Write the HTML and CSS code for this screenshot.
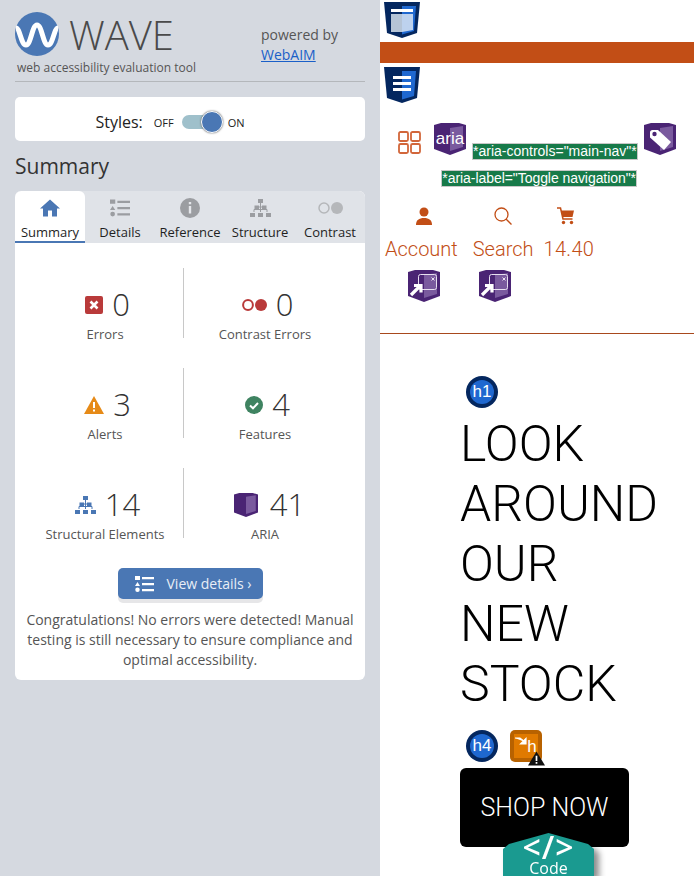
FILE: index.html
```html
<!DOCTYPE html>
<html lang="en">
<head>
<meta charset="utf-8">
<title>WAVE</title>
<link rel="stylesheet" href="styles.css">
</head>
<body>
<svg class="defs" width="0" height="0" aria-hidden="true">
  <symbol id="shield" viewBox="0 0 36 36">
    <path d="M0 0H36L33 31L18 36L3 31Z" fill="#04275f"/>
    <path d="M18 4H32L30 29L18 32.500Z" fill="#1f68d0"/>
  </symbol>
  <symbol id="aria" viewBox="0 0 32 32">
    <path d="M0 2L7 0H25L32 2V26L16 32L0 26Z" fill="#4a2474"/>
    <path d="M16 5L29 3V24L16 28Z" fill="#7a5a9e"/>
  </symbol>
  <symbol id="popup" viewBox="0 0 32 32">
    <use href="#aria" width="32" height="32"/>
    <rect x="10.500" y="4.500" width="18" height="15" rx="2" fill="none" stroke="#e8e0f0" stroke-width="1"/>
    <path d="M23.500 7.500l3 3m0-3l-3 3" stroke="#e8e0f0" stroke-width="1"/>
    <path d="M3 25L12 16M6 15.500H13V22.500" fill="none" stroke="#fff" stroke-width="3.200"/>
  </symbol>
  <symbol id="heading" viewBox="0 0 32 32">
    <circle cx="16" cy="16" r="16" fill="#04275f"/>
    <circle cx="16" cy="16" r="12" fill="#1f68d0"/>
  </symbol>
  <symbol id="tree" viewBox="0 0 21 18">
    <path d="M10.500 4V8M4 13V10.500H17V13M10.500 8V13M7 8H14" fill="none" stroke="currentColor" stroke-width="1"/>
    <path d="M8 0H13V4H8ZM4.500 6.500H9V10H4.500ZM12 6.500H16.500V10H12ZM0 14H5V18H0ZM8 14H13V18H8ZM16 14H21V18H16Z" fill="currentColor"/>
  </symbol>
  <symbol id="list" viewBox="0 0 19 16">
    <path d="M0 0H5V4H0ZM2.500 6L5 10H0ZM2.500 11.500A2.250 2.250 0 1 1 2.490 16Z M2.500 11.500A2.250 2.250 0 1 0 2.510 16Z" fill="currentColor"/>
    <path d="M7 1H19V3.200H7ZM7 7H19V9.200H7ZM7 13H19V15.200H7Z" fill="currentColor"/>
  </symbol>
</svg>

<main class="page">
  <aside class="side">
    <header class="brand">
      <div class="brand-main">
        <div class="logo-row">
          <svg class="logo" viewBox="0 0 44 44" aria-hidden="true">
            <circle cx="22" cy="22" r="22" fill="#4a77b4"/>
            <path d="M1 16C5 16 6 33 11 33C16 33 17 13 22 13C27 13 28 33 33 33C38 33 39 16 43 16" fill="none" stroke="#fff" stroke-width="5"/>
          </svg>
          <span class="wave">WAVE</span>
        </div>
        <p class="tagline">web accessibility evaluation tool</p>
      </div>
      <div class="powered">powered by<br><a href="#">WebAIM</a></div>
    </header>

    <section class="styles-card">
      <span class="styles-label">Styles:</span>
      <span class="switch-text off">OFF</span>
      <span class="switch"><span class="knob"></span></span>
      <span class="switch-text">ON</span>
    </section>

    <h2 class="summary-title">Summary</h2>

    <section class="panel">
      <nav class="tabs">
        <div class="tab active">
          <svg class="tab-icon" viewBox="0 0 20 17"><path d="M10 0L20 9H17V17H12V11H8V17H3V9H0Z" fill="#4a77b4"/></svg>
          <span>Summary</span>
        </div>
        <div class="tab">
          <svg class="tab-icon list-icon"><use href="#list"/></svg>
          <span>Details</span>
        </div>
        <div class="tab">
          <svg class="tab-icon" viewBox="0 0 20 20"><circle cx="10" cy="10" r="10" fill="#9b9da1"/><path d="M8.800 4H11.200V6.300H8.800ZM8.800 8H11.200V15.500H8.800Z" fill="#e4e6ea"/></svg>
          <span>Reference</span>
        </div>
        <div class="tab">
          <svg class="tab-icon tree-grey"><use href="#tree"/></svg>
          <span>Structure</span>
        </div>
        <div class="tab">
          <svg class="tab-icon contrast-icon" viewBox="0 0 25 12"><circle cx="6" cy="6" r="5" fill="none" stroke="#b5b7ba" stroke-width="1.500"/><circle cx="19" cy="6" r="6" fill="#b5b7ba"/></svg>
          <span>Contrast</span>
        </div>
      </nav>

      <div class="stats">
        <div class="stat">
          <div class="stat-top">
            <svg class="ic" width="18" height="18" viewBox="0 0 18 18"><rect width="18" height="18" rx="2" fill="#b93a3a"/><path d="M5.500 5.500l7 7m0-7l-7 7" stroke="#fff" stroke-width="2.600"/></svg>
            <span class="num">0</span>
          </div>
          <div class="stat-label">Errors</div>
        </div>
        <div class="stat">
          <div class="stat-top">
            <svg class="ic" width="25" height="12" viewBox="0 0 25 12"><circle cx="6" cy="6" r="4.900" fill="none" stroke="#b93a3a" stroke-width="2"/><circle cx="19" cy="6" r="6" fill="#b93a3a"/></svg>
            <span class="num">0</span>
          </div>
          <div class="stat-label">Contrast Errors</div>
        </div>
        <div class="stat">
          <div class="stat-top">
            <svg class="ic" width="20" height="18" viewBox="0 0 20 18"><path d="M10 0L20 18H0Z" fill="#e68a17"/><path d="M9 6H11V12H9ZM9 13.500H11V15.500H9Z" fill="#fff"/></svg>
            <span class="num">3</span>
          </div>
          <div class="stat-label">Alerts</div>
        </div>
        <div class="stat">
          <div class="stat-top">
            <svg class="ic" width="18" height="18" viewBox="0 0 18 18"><circle cx="9" cy="9" r="9" fill="#3f8361"/><path d="M5 9.500l3 2.800 5-5.300" fill="none" stroke="#fff" stroke-width="2"/></svg>
            <span class="num">4</span>
          </div>
          <div class="stat-label">Features</div>
        </div>
        <div class="stat">
          <div class="stat-top">
            <svg class="ic tree-blue" width="21" height="18"><use href="#tree"/></svg>
            <span class="num">14</span>
          </div>
          <div class="stat-label">Structural Elements</div>
        </div>
        <div class="stat">
          <div class="stat-top wide">
            <svg class="ic" width="24" height="24"><use href="#aria" width="24" height="24"/></svg>
            <span class="num">41</span>
          </div>
          <div class="stat-label">ARIA</div>
        </div>
      </div>

      <div class="details-wrap">
        <a class="details-btn" href="#">
          <svg class="btn-icon"><use href="#list"/></svg>
          <span>View details ›</span>
        </a>
      </div>

      <p class="congrats">Congratulations! No errors were detected! Manual testing is still necessary to ensure compliance and optimal accessibility.</p>
    </section>
  </aside>

  <section class="site">
    <svg class="wave-icon first"><use href="#shield"/><path d="M7 7H29V10H7Z" fill="#fff"/><path d="M7 12H18V30H7Z" fill="#b5c4d6"/><path d="M18 12H29V28L18 30Z" fill="#bdd2ee"/></svg>
    <div class="orange-bar"></div>
    <svg class="wave-icon"><use href="#shield"/><path d="M9 9H27V12H9ZM9 15H27V18H9ZM9 21H27V24H9Z" fill="#fff"/></svg>

    <div class="aria-row">
      <svg class="grid-icon" viewBox="0 0 23 23"><g fill="none" stroke="#d2663a" stroke-width="1.800" stroke-linejoin="round"><rect x="1" y="1" width="9" height="9" rx="1.500"/><rect x="13" y="1" width="9" height="9" rx="1.500"/><rect x="1" y="13" width="9" height="9" rx="1.500"/><rect x="13" y="13" width="9" height="9" rx="1.500"/></g></svg>
      <span class="badge">
        <svg width="32" height="32"><use href="#aria" width="32" height="32"/></svg>
        <span class="badge-text">aria</span>
      </span>
      <span class="attr first-attr">*aria-controls="main-nav"*</span>
      <svg class="tag-icon" width="32" height="32"><use href="#aria" width="32" height="32"/><path d="M6 9.500A2.500 2.500 0 0 1 8.500 7H14L27 19L20 27L6 14.500Z" fill="#fff"/><circle cx="10.500" cy="11" r="2.200" fill="#4a2474"/></svg>
    </div>
    <div class="attr-row"><span class="attr">*aria-label="Toggle navigation"*</span></div>

    <div class="nav-row">
      <div class="nav-item account">
        <svg class="nav-icon" viewBox="0 0 18 18"><circle cx="9" cy="5" r="4.500" fill="#c24e16"/><path d="M1 18C1 13 4 11 9 11S17 13 17 18Z" fill="#c24e16"/></svg>
        <span>Account</span>
      </div>
      <div class="nav-item search">
        <svg class="nav-icon" viewBox="0 0 18 18"><circle cx="7.500" cy="7.500" r="6.500" fill="none" stroke="#c24e16" stroke-width="1.300"/><path d="M12 12L17.500 17.500" stroke="#c24e16" stroke-width="1.300"/></svg>
        <span>Search</span>
      </div>
      <div class="nav-item cart">
        <svg class="nav-icon" viewBox="0 0 18 18"><path d="M0 1H3.500L6 12H15.500" fill="none" stroke="#c24e16" stroke-width="1.500"/><path d="M4 3.500H17L15.500 10H5.500Z" fill="#c24e16"/><circle cx="6.500" cy="15.500" r="1.700" fill="#c24e16"/><circle cx="14.500" cy="15.500" r="1.700" fill="#c24e16"/></svg>
        <span>14.40</span>
      </div>
    </div>

    <div class="popup-row">
      <svg width="32" height="32"><use href="#popup" width="32" height="32"/></svg>
      <svg width="32" height="32"><use href="#popup" width="32" height="32"/></svg>
    </div>

    <hr class="rule">

    <span class="badge h-first">
      <svg width="32" height="32"><use href="#heading" width="32" height="32"/></svg>
      <span class="badge-text">h1</span>
    </span>
    <h1 class="hero">LOOK AROUND OUR NEW STOCK</h1>

    <div class="h4-row">
      <span class="badge">
        <svg width="32" height="32"><use href="#heading" width="32" height="32"/></svg>
        <span class="badge-text">h4</span>
      </span>
      <span class="badge skipped">
        <svg width="32" height="32" viewBox="0 0 32 32"><rect width="32" height="32" rx="5" fill="#b86200"/><rect x="4" y="4" width="24" height="24" fill="#e07a00"/><path d="M5 8H10L15 12M16 8.500V14H10.500Z" fill="#fff" stroke="#fff" stroke-width="1.200"/></svg>
        <span class="badge-text">h</span>
        <svg class="warn" width="17" height="15" viewBox="0 0 16 13"><path d="M8 0L16 13H0Z" fill="#111"/><path d="M7.200 4H8.800V8.800H7.200ZM7.200 9.800H8.800V11.400H7.200Z" fill="#fff"/></svg>
      </span>
    </div>

    <a class="shop" href="#">SHOP NOW</a>
    <div class="code-tab">
      <span class="code-mark">&lt;/&gt;</span>
      <span class="code-label">Code</span>
    </div>
  </section>
</main>
</body>
</html>
```

FILE: styles.css
```css
html, body {
  margin: 0;
  padding: 0;
  height: 876px;
  overflow: hidden;
  background: #fff;
}

.defs {
  position: absolute;
}

.page {
  display: flex;
  width: 694px;
  height: 876px;
}

/* Sidebar */
.side {
  box-sizing: border-box;
  flex: 0 0 380px;
  padding: 0 15px;
  background: #d5d9e0;
  font-family: "Open Sans", sans-serif;
  color: #444;
}

.brand {
  display: flex;
  height: 81px;
  box-sizing: content-box;
  border-bottom: 1px solid #b4b7bb;
}

.brand-main {
  flex: 0 0 246px;
}

.logo-row {
  display: flex;
  align-items: center;
  gap: 10px;
  padding-top: 12px;
  height: 44px;
}

.logo {
  width: 44px;
  height: 44px;
  flex: none;
}

.wave {
  padding-top: 2px;
  font-weight: 300;
  font-size: 40px;
  line-height: 40px;
  color: #4a4a4a;
}

.tagline {
  margin: 3px 0 0 2px;
  font-size: 12px;
  line-height: 18px;
  color: #555;
}

.powered {
  padding-top: 25px;
  font-size: 14px;
  line-height: 20px;
  color: #555;
}

.powered a {
  color: #1a5fc8;
}

.styles-card {
  display: flex;
  align-items: center;
  justify-content: center;
  box-sizing: border-box;
  height: 44px;
  margin-top: 15px;
  padding: 6px 40px 0 0;
  border-radius: 5px;
  background: #fff;
  color: #222;
}

.styles-label {
  font-size: 16px;
  margin-right: 11px;
}

.switch-text {
  font-size: 11px;
}

.switch {
  position: relative;
  width: 36px;
  height: 14px;
  margin: 0 10px 0 8px;
  border-radius: 7px;
  background: #9fc0cb;
}

.knob {
  position: absolute;
  top: -4px;
  right: -5px;
  box-sizing: border-box;
  width: 22px;
  height: 22px;
  border: 1px solid #fff;
  border-radius: 50%;
  background: #4a77b4;
  box-shadow: 0 0 2px #555;
}

.summary-title {
  margin: 12px 0 12px;
  font-size: 21px;
  line-height: 26px;
  font-weight: 400;
  color: #333;
}

.panel {
  border-radius: 6px;
  overflow: hidden;
  background: #fff;
}

.tabs {
  display: grid;
  grid-template-columns: repeat(5, 70px);
  height: 52px;
  background: #e0e3e8;
}

.tab {
  display: flex;
  flex-direction: column;
  align-items: center;
  box-sizing: border-box;
  height: 52px;
  padding-top: 7px;
  font-size: 13px;
  line-height: 18px;
  color: #1f1f1f;
}

.tab span {
  margin-top: auto;
  padding-bottom: 2px;
  white-space: nowrap;
}

.tab.active {
  background: #fff;
  border-radius: 6px 6px 0 0;
  border-bottom: 2px solid #4a77b4;
}

.tab.active span {
  padding-bottom: 0;
}

.tab-icon {
  width: 20px;
  height: 20px;
  flex: none;
}

.contrast-icon {
  width: 25px;
}

.list-icon {
  color: #9b9da1;
}

.tree-grey {
  width: 21px;
  height: 18px;
  margin-top: 1px;
  color: #9b9da1;
}

.tree-blue {
  color: #4a77b4;
}

.stats {
  display: grid;
  grid-template-columns: 169px 181px;
  grid-auto-rows: 70px;
  row-gap: 30px;
  padding-top: 25px;
}

.stat {
  display: flex;
  flex-direction: column;
  align-items: center;
}

.stat:nth-child(odd) {
  box-sizing: border-box;
  border-right: 1px solid #c8c8c8;
  padding-left: 12px;
}

.stat:nth-child(even) {
  padding-right: 19px;
}

.stat-top {
  display: flex;
  align-items: center;
  gap: 9px;
  height: 34px;
  margin: 20px 0 0 5px;
}

.stat-top.wide {
  gap: 12px;
  margin-left: 9px;
}

.num {
  padding-bottom: 2px;
  font-size: 31px;
  font-weight: 300;
  line-height: 32px;
  color: #333;
}

.stat-label {
  margin-top: 3px;
  font-size: 13px;
  line-height: 18px;
  color: #555;
  white-space: nowrap;
}

.details-wrap {
  display: flex;
  justify-content: center;
  margin-top: 30px;
}

.details-btn {
  display: flex;
  align-items: center;
  gap: 13px;
  box-sizing: border-box;
  width: 145px;
  height: 31px;
  padding-left: 17px;
  border-radius: 5px;
  background: #4a77b4;
  color: #e8eef6;
  font-size: 14px;
  text-decoration: none;
  box-shadow: 0 4px 0 #e6e6e8;
}

.btn-icon {
  width: 19px;
  height: 16px;
  color: #fff;
}

.congrats {
  margin: 11px 0 0;
  padding: 0 10px 10px;
  font-size: 14px;
  line-height: 20px;
  text-align: center;
  color: #555;
}

/* Evaluated page */
.site {
  flex: 1;
  min-width: 0;
  font-family: Roboto, sans-serif;
  font-weight: 300;
  color: #000;
}

.wave-icon {
  display: block;
  width: 36px;
  height: 36px;
  margin: 4px 0 0 4px;
}

.wave-icon.first {
  margin-top: 2px;
}

.orange-bar {
  height: 21px;
  margin-top: 4px;
  background: #c24e16;
}

.aria-row {
  display: flex;
  align-items: flex-start;
  height: 32px;
  margin-top: 20px;
  padding-left: 18px;
}

.grid-icon {
  width: 23px;
  height: 23px;
  margin-top: 8px;
  margin-right: 13px;
}

.badge {
  position: relative;
  display: inline-block;
  width: 32px;
  height: 32px;
  flex: none;
  line-height: 0;
}

.badge-text {
  position: absolute;
  top: 0;
  left: 0;
  width: 100%;
  font-family: "Liberation Sans", sans-serif;
  font-weight: 400;
  font-size: 17px;
  line-height: 32px;
  text-align: center;
  color: #fff;
}

.skipped .badge-text {
  left: 6px;
  top: 1px;
}

.attr {
  display: inline-block;
  box-sizing: border-box;
  height: 17px;
  border: 1px solid #c8c8c8;
  background: #177a49;
  color: #fff;
  font-family: "Liberation Sans", sans-serif;
  font-weight: 400;
  font-size: 14px;
  line-height: 15px;
  white-space: nowrap;
}

.first-attr {
  margin: 20px 6px 0 6px;
}

.attr-row {
  display: flex;
  justify-content: flex-end;
  margin-top: 15px;
  padding-right: 57px;
}

.attr-row .attr {
  letter-spacing: -0.06px;
}

.nav-row {
  display: flex;
  margin-top: 20px;
  padding-left: 5px;
  color: #c24e16;
  font-size: 20px;
  line-height: 24px;
}

.nav-item {
  display: flex;
  flex-direction: column;
  align-items: center;
  gap: 12px;
}

.search {
  margin-left: 15px;
}

.cart {
  margin-left: 10px;
  letter-spacing: 0.3px;
}

.account .nav-icon {
  margin-left: 6px;
}

.cart .nav-icon {
  margin-right: 6px;
}

.nav-icon {
  width: 18px;
  height: 18px;
}

.popup-row {
  display: flex;
  gap: 39px;
  margin-top: 9px;
  padding-left: 28px;
  height: 32px;
}

.rule {
  margin: 31px 0 0;
  border: 0;
  height: 1px;
  background: #a8491d;
}

.h-first {
  display: block;
  margin: 42px 0 0 86px;
}

.hero {
  width: 200px;
  margin: 6px 0 0 80px;
  font-size: 50px;
  line-height: 60px;
  font-weight: 300;
}

.h4-row {
  display: flex;
  gap: 12px;
  margin-top: 16px;
  padding-left: 86px;
}

.warn {
  position: absolute;
  right: -3px;
  bottom: -4px;
}

.shop {
  display: flex;
  align-items: center;
  justify-content: center;
  width: 169px;
  height: 79px;
  margin: 6px 0 0 80px;
  border-radius: 6px;
  background: #000;
  color: #fff;
  font-size: 25px;
  text-decoration: none;
}

.code-tab {
  position: relative;
  z-index: 1;
  display: flex;
  flex-direction: column;
  align-items: center;
  width: 91px;
  height: 43px;
  margin: -14px 0 0 123px;
  color: #fff;
  font-family: "Open Sans", sans-serif;
  font-weight: 400;
  filter: drop-shadow(5px 4px 3px rgba(0, 0, 0, 0.45));
}

.code-tab::before {
  content: "";
  position: absolute;
  inset: 0;
  background: #1a9a90;
  clip-path: polygon(0 16px, 6px 11px, 50% 0, calc(100% - 6px) 11px, 100% 16px, 100% 100%, 0 100%);
}

.code-mark {
  position: relative;
  font-size: 32px;
  font-weight: 600;
  letter-spacing: 1px;
  line-height: 28px;
}

.code-label {
  position: relative;
  font-size: 16px;
  line-height: 15px;
}
```
